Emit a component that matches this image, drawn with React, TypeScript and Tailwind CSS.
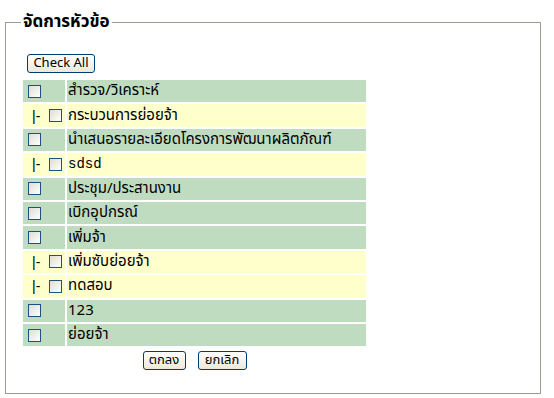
import React from "react";

type Row = { label: string; child?: boolean; mono?: boolean };

const rows: Row[] = [
  { label: "สำรวจ/วิเคราะห์" },
  { label: "กระบวนการย่อยจ้า", child: true },
  { label: "นำเสนอรายละเอียดโครงการพัฒนาผลิตภัณฑ์" },
  { label: "sdsd", child: true, mono: true },
  { label: "ประชุม/ประสานงาน" },
  { label: "เบิกอุปกรณ์" },
  { label: "เพิ่มจ้า" },
  { label: "เพิ่มซับย่อยจ้า", child: true },
  { label: "ทดสอบ", child: true },
  { label: "123" },
  { label: "ย่อยจ้า" },
];

function Box() {
  return (
    <span className="inline-block w-[13px] h-[13px] border border-[#1c5180] bg-gradient-to-br from-[#dcdcd7] to-[#ffffff] align-middle" />
  );
}

function XPButton({ children, className = "" }: { children: React.ReactNode; className?: string }) {
  return (
    <button
      className={
        "h-[19px] rounded-[3px] border border-[#003c74] bg-gradient-to-b from-[#ffffff] to-[#ece9d8] text-[13px] leading-[17px] text-black " +
        className
      }
    >
      {children}
    </button>
  );
}

export default function App() {
  return (
    <div
      className="w-[554px] h-[398px] bg-white pl-[5px] pt-[12px]"
      style={{ fontFamily: '"Noto Sans Thai", Tahoma, "DejaVu Sans", sans-serif' }}
    >
      <fieldset className="w-[536px] h-[382px] border border-[#9d9d8f] pl-[15px] pr-[10px]">
        <legend className="ml-0 px-[2px] text-[17px] font-bold leading-[20px] text-black">
          จัดการหัวข้อ
        </legend>
        <div className="pt-[18px] pl-[6px]">
          <XPButton className="w-[68px]">Check All</XPButton>
        </div>
        <table className="mt-[4px] border-separate border-spacing-[2px] text-[15px] text-black">
          <tbody>
            {rows.map((r, i) => {
              const bg = r.child ? "bg-[#ffffcc]" : "bg-[#c0dcc0]";
              return (
                <tr key={i} className="h-[22.4px]">
                  <td className={`${bg} w-[42px] p-0 leading-none`}>
                    {r.child ? (
                      <span className="flex items-center">
                        <span className="ml-[9px] w-[17px] text-[14px]" style={{ fontFamily: '"Liberation Sans", sans-serif' }}>|-</span>
                        <Box />
                      </span>
                    ) : (
                      <span className="flex items-center">
                        <span className="ml-[5px]" />
                        <Box />
                      </span>
                    )}
                  </td>
                  <td className={`${bg} w-[299px] px-[1px] py-0 leading-[20px]`}>
                    {r.mono ? (
                      <span className="text-[14px]" style={{ fontFamily: '"Liberation Mono", monospace' }}>
                        {r.label}
                      </span>
                    ) : (
                      r.label
                    )}
                  </td>
                </tr>
              );
            })}
          </tbody>
        </table>
        <div className="w-[347px] flex justify-center gap-[12px] mt-[3px]">
          <XPButton className="w-[43px]">ตกลง</XPButton>
          <XPButton className="w-[49px]">ยกเลิก</XPButton>
        </div>
      </fieldset>
    </div>
  );
}
